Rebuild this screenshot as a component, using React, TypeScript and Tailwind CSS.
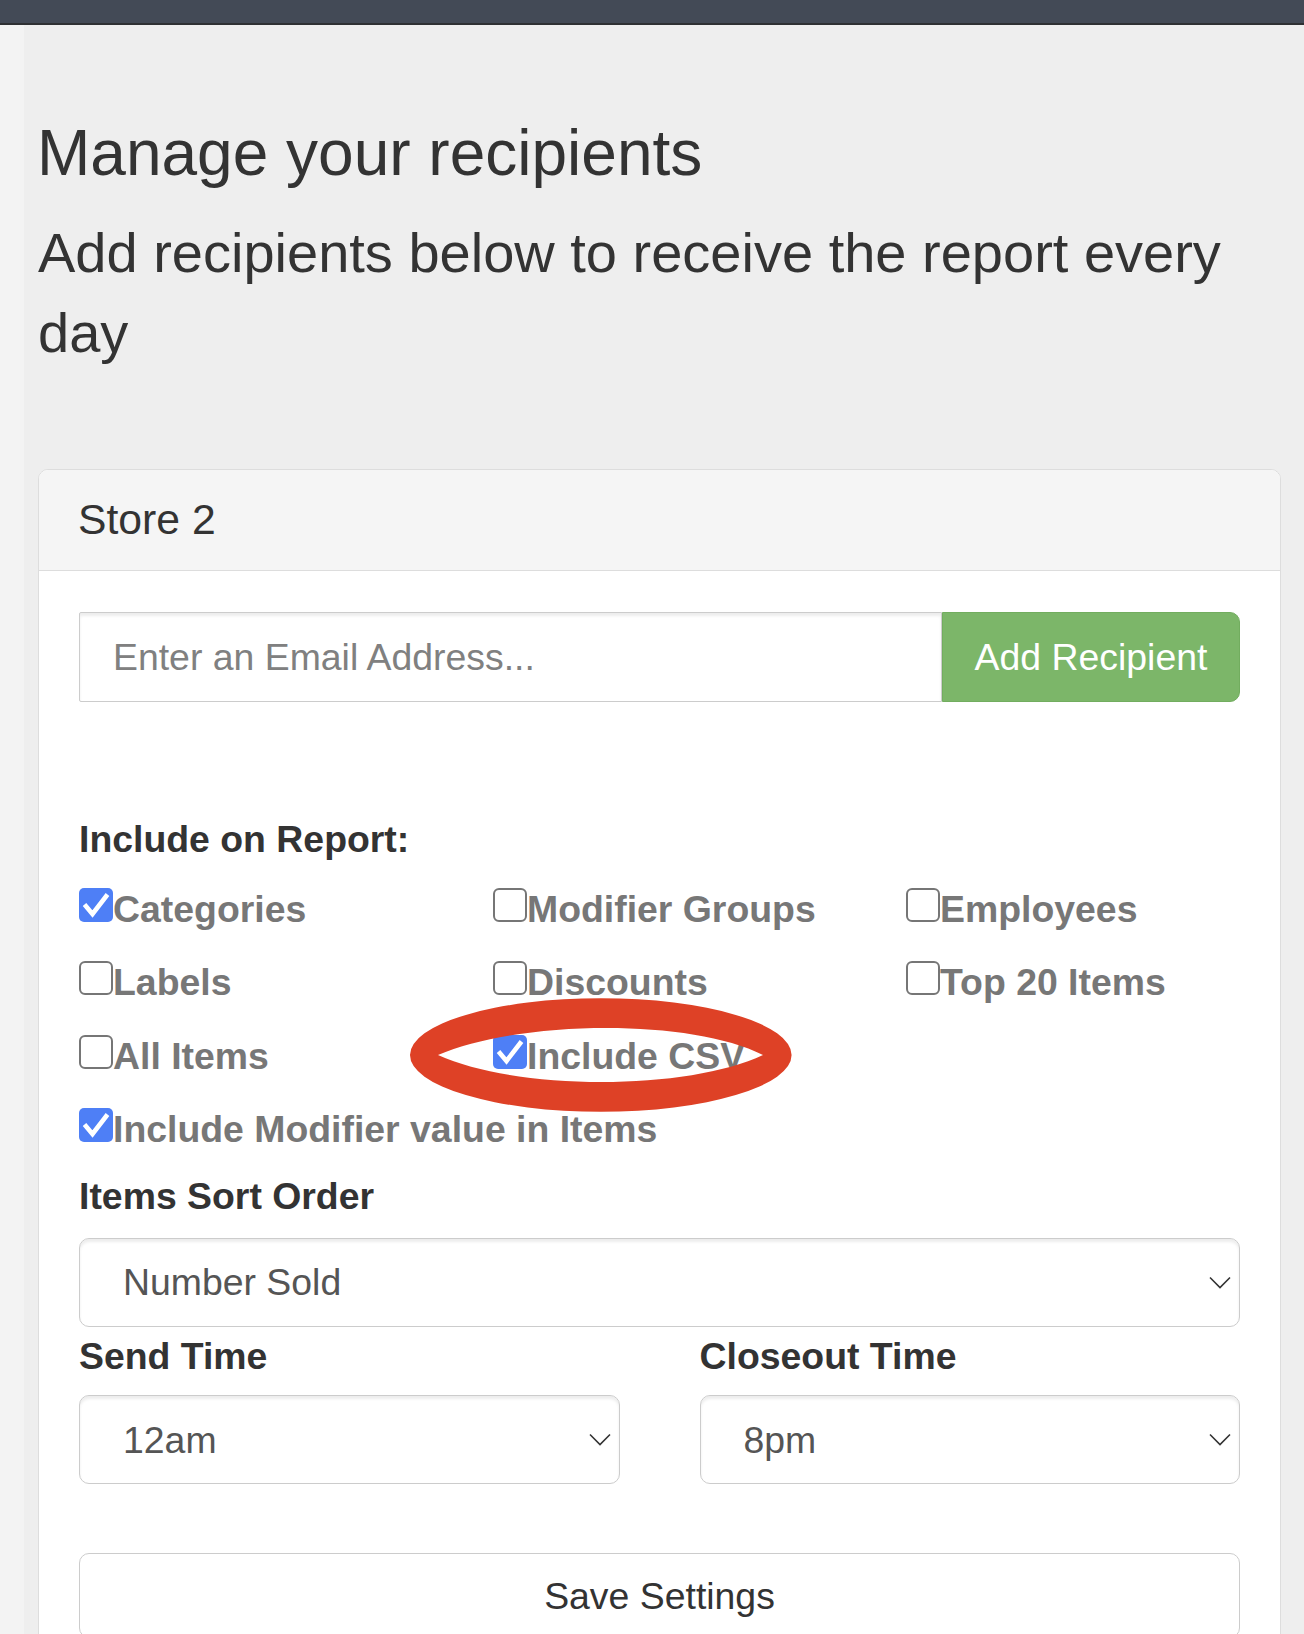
import React from "react";

const FONT = { fontFamily: '"Liberation Sans", Arial, Helvetica, sans-serif' };

function Box({ checked }: { checked?: boolean }) {
  if (checked) {
    return (
      <span className="inline-block w-[34px] h-[34px] overflow-hidden align-baseline rounded-[5px] bg-[#4e7ff6]">
        <svg width="34" height="34" viewBox="0 0 34 34" className="block">
          <path d="M5.5 16.5 L13.5 26 L28.5 6.5" fill="none" stroke="#ffffff" strokeWidth="4.6" strokeLinejoin="miter" />
        </svg>
      </span>
    );
  }
  return (
    <span className="inline-block w-[34px] h-[34px] overflow-hidden align-baseline rounded-[6px] border-2 border-[#767676] bg-white"></span>
  );
}

function Check({ label, checked }: { label: string; checked?: boolean }) {
  return (
    <div className="h-[73.3px] leading-[73.3px] whitespace-nowrap text-[37.4px] font-bold text-[#777777]">
      <Box checked={checked} />
      <span>{label}</span>
    </div>
  );
}

function Chevron() {
  return (
    <svg width="22" height="13" viewBox="0 0 22 13" className="block">
      <polyline points="1,1.5 11,11.5 21,1.5" fill="none" stroke="#333333" strokeWidth="1.6" />
    </svg>
  );
}

function Select({ value }: { value: string }) {
  return (
    <div className="h-[89px] flex items-center justify-between border border-[#cccccc] rounded-[10px] bg-white shadow-[inset_0_3px_3px_rgba(0,0,0,0.075)] pl-[43px] pr-[8px]">
      <span className="text-[37.4px] text-[#555555]">{value}</span>
      <Chevron />
    </div>
  );
}

export default function App() {
  return (
    <div className="relative w-[1304px] h-[1634px] overflow-hidden bg-[#eeeeee]" style={FONT}>
      <div className="h-[25px] bg-[#434a56] border-b-2 border-[#2e3033]"></div>
      <div className="flex h-[1609px]">
        <div className="w-[24px] bg-[#f3f3f3] shrink-0"></div>
        <div className="flex-1 pl-[14px] pr-[23px]">
          <h1 className="mt-[91.5px] text-[64px] leading-[72px] text-[#333333] font-normal -ml-[1px]">
            Manage your recipients
          </h1>
          <h3 className="mt-[24.8px] text-[56px] leading-[80px] text-[#333333] font-normal">
            Add recipients below to receive the report every day
          </h3>
          <div className="mt-[95.4px] border border-[#dddddd] rounded-[10px] bg-white overflow-hidden">
            <div className="bg-[#f5f5f5] border-b border-[#dddddd] px-[39px] pt-[26px] pb-[28.6px]">
              <div className="text-[42.7px] leading-[46.2px] text-[#333333]">Store 2</div>
            </div>
            <div className="pt-[41px] px-[40px] pb-[40px]">
              <div className="flex h-[90px]">
                <input
                  type="text"
                  placeholder="Enter an Email Address..."
                  className="flex-1 min-w-0 h-[90px] border border-[#cccccc] rounded-l-[2px] bg-white pl-[33px] text-[37.4px] text-[#555555] placeholder:text-[#808080] shadow-[inset_0_3px_3px_rgba(0,0,0,0.075)] outline-none"
                  style={FONT}
                />
                <button
                  className="h-[90px] w-[298px] shrink-0 bg-[#7cb669] border border-[#72ad5f] rounded-r-[10px] text-white text-[37.4px]"
                  style={FONT}
                >
                  Add Recipient
                </button>
              </div>

              <div className="mt-[111px] text-[37.4px] leading-[52px] font-bold text-[#333333]">
                Include on Report:
              </div>

              <div className="mt-[7.5px] grid grid-cols-[414px_413px_1fr]">
                <Check label="Categories" checked />
                <Check label="Modifier Groups" />
                <Check label="Employees" />
                <Check label="Labels" />
                <Check label="Discounts" />
                <Check label="Top 20 Items" />
                <Check label="All Items" />
                <Check label="Include CSV" checked />
                <div></div>
                <div className="col-span-3">
                  <Check label="Include Modifier value in Items" checked />
                </div>
              </div>

              <div className="mt-[4px] text-[37.4px] leading-[52px] font-bold text-[#333333]">
                Items Sort Order
              </div>
              <div className="mt-[15.5px]">
                <Select value="Number Sold" />
              </div>

              <div className="mt-[3px] grid grid-cols-2 gap-x-[80px]">
                <div>
                  <div className="text-[37.4px] leading-[52px] font-bold text-[#333333]">Send Time</div>
                  <div className="mt-[13.6px]">
                    <Select value="12am" />
                  </div>
                </div>
                <div>
                  <div className="text-[37.4px] leading-[52px] font-bold text-[#333333]">Closeout Time</div>
                  <div className="mt-[13.6px]">
                    <Select value="8pm" />
                  </div>
                </div>
              </div>

              <button
                className="mt-[68.7px] w-full border border-[#cccccc] rounded-[10px] bg-white py-[15.6px] text-[37.4px] leading-[52px] text-[#333333]"
                style={FONT}
              >
                Save Settings
              </button>
            </div>
          </div>
        </div>
      </div>

      <svg
        className="absolute top-0 left-0 pointer-events-none"
        width="1304"
        height="1634"
        viewBox="0 0 1304 1634"
      >
        <path
          fillRule="evenodd"
          fill="#de4126"
          d="M410,1055 A190.8,56.7 0 1,0 791.6,1055 A190.8,56.7 0 1,0 410,1055 Z M438,1055 C520,1020 690,1018 763,1055 C690,1090 520,1092 438,1055 Z"
        />
      </svg>
    </div>
  );
}
